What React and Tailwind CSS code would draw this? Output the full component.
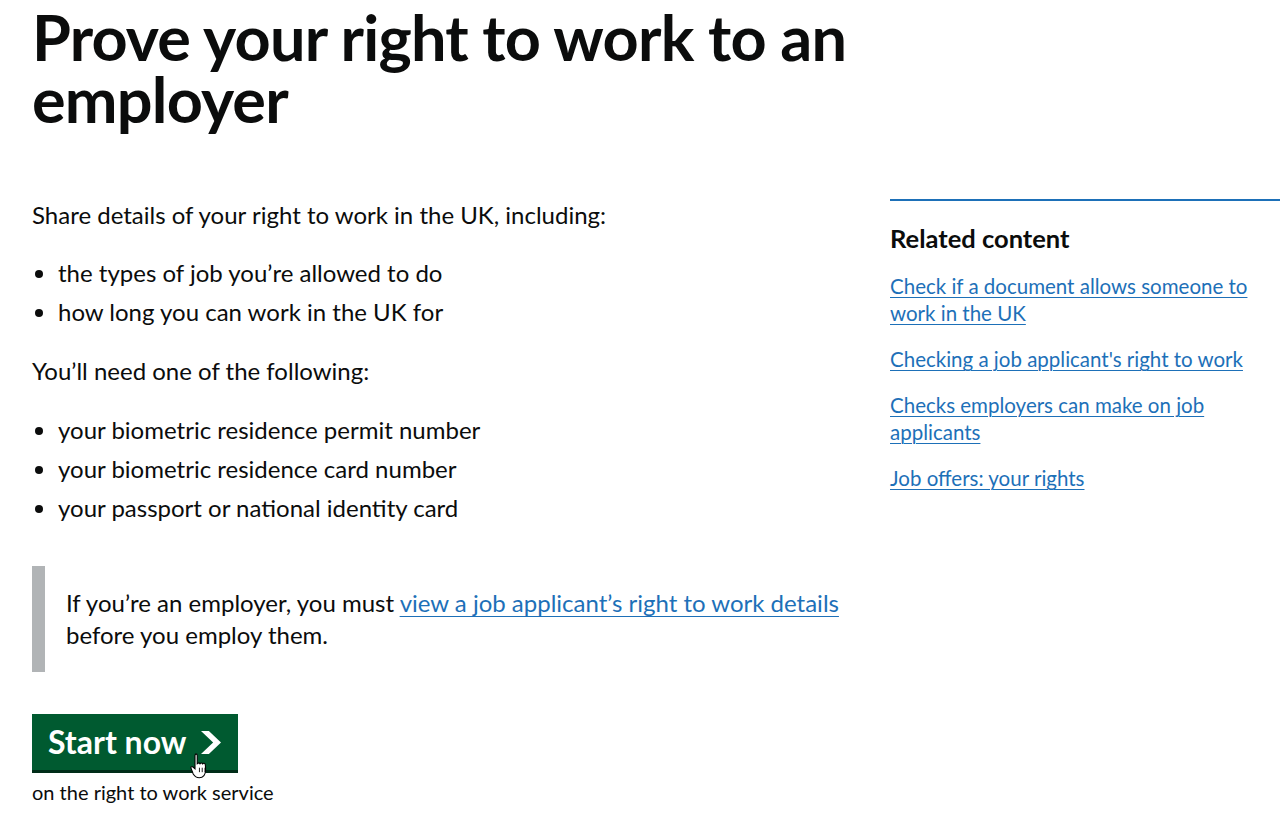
export default function App() {
  const font = { fontFamily: 'Lato, "Noto Sans", Arial, sans-serif' };
  return (
    <div className="min-h-screen bg-white text-[#0b0c0c] overflow-hidden" style={font}>
      <div className="flex pl-[32px]">
        {/* main column */}
        <div className="w-[826px] shrink-0">
          <h1 className="text-[63px] leading-[62px] font-bold tracking-[-0.8px] pt-[6px] mb-[69px]">
            Prove your right to work to an employer
          </h1>

          <p className="text-[24px] leading-[32px] mb-[26px]">Share details of your right to work in the UK, including:</p>
          <ul className="text-[24px] leading-[32px] mb-[27px] list-disc pl-[26px]">
            <li className="mb-[7px]">the types of job you’re allowed to do</li>
            <li>how long you can work in the UK for</li>
          </ul>

          <p className="text-[24px] leading-[32px] mb-[27px]">You’ll need one of the following:</p>
          <ul className="text-[24px] leading-[32px] mb-[42px] list-disc pl-[26px]">
            <li className="mb-[7px]">your biometric residence permit number</li>
            <li className="mb-[7px]">your biometric residence card number</li>
            <li>your passport or national identity card</li>
          </ul>

          <div className="border-l-[13px] border-[#b1b4b6] pl-[21px] pt-[21px] pb-[21px] text-[24px] leading-[32px] mb-[42px]">
            If you’re an employer, you must{' '}
            <a href="#" className="text-[#1d70b8] underline decoration-1 underline-offset-[4px]">
              view a job applicant’s right to work details
            </a>{' '}
            before you employ them.
          </div>

          <div className="relative inline-block">
            <a
              href="#"
              className="flex items-center gap-[15px] bg-[#005a30] text-white font-bold text-[32px] leading-[32px] pl-[16px] pr-[17px] h-[56px] shadow-[0_3px_0_#002d18]"
            >
              Start now
              <svg width="20" height="23" viewBox="0 0 33 40" preserveAspectRatio="none" aria-hidden="true">
                <path fill="currentColor" d="M0 0h13l20 20-20 20H0l20-20z" />
              </svg>
            </a>
            {/* mouse pointer */}
            <svg className="absolute left-[158px] top-[38px]" width="20" height="27" viewBox="0 0 18 24">
              <path
                d="M5 1.5c.9 0 1.5.7 1.5 1.5v7.5l.2-.1c.3-.9 1.8-1 2.3 0 .5-.9 2-.9 2.4.1.5-.8 2-.6 2.300.5.2.7.3 3.5.3 5.6 0 3.5-2 6.4-5.7 6.4-2.7 0-4-1.2-5.4-3.4L1 14.6c-.6-.9.4-2 1.4-1.5l2.1 1.8V3c0-.8.6-1.500 1.5-1.5z"
                fill="#fff"
                stroke="#000"
                strokeWidth="1"
              />
              <path d="M8.5 14v4M11 14v4M13.5 14v4" stroke="#000" strokeWidth="0.8" />
            </svg>
          </div>
          <p className="text-[20px] leading-[24px] mt-[10px]">on the right to work service</p>
        </div>

        {/* related content */}
        <aside className="ml-[32px] w-[390px] shrink-0 pt-[199px]">
          <div className="border-t-2 border-[#1d70b8] pt-[22px]">
            <h2 className="text-[25.5px] leading-[30px] font-bold mb-[20px]">Related content</h2>
            <ul className="text-[20.5px] leading-[27px] text-[#1d70b8]">
              <li className="mb-[19px]">
                <a href="#" className="underline decoration-1 underline-offset-[3px]">Check if a document allows someone to work in the UK</a>
              </li>
              <li className="mb-[19px]">
                <a href="#" className="underline decoration-1 underline-offset-[3px]">Checking a job applicant's right to work</a>
              </li>
              <li className="mb-[19px]">
                <a href="#" className="underline decoration-1 underline-offset-[3px]">Checks employers can make on job applicants</a>
              </li>
              <li>
                <a href="#" className="underline decoration-1 underline-offset-[3px]">Job offers: your rights</a>
              </li>
            </ul>
          </div>
        </aside>
      </div>
    </div>
  );
}
